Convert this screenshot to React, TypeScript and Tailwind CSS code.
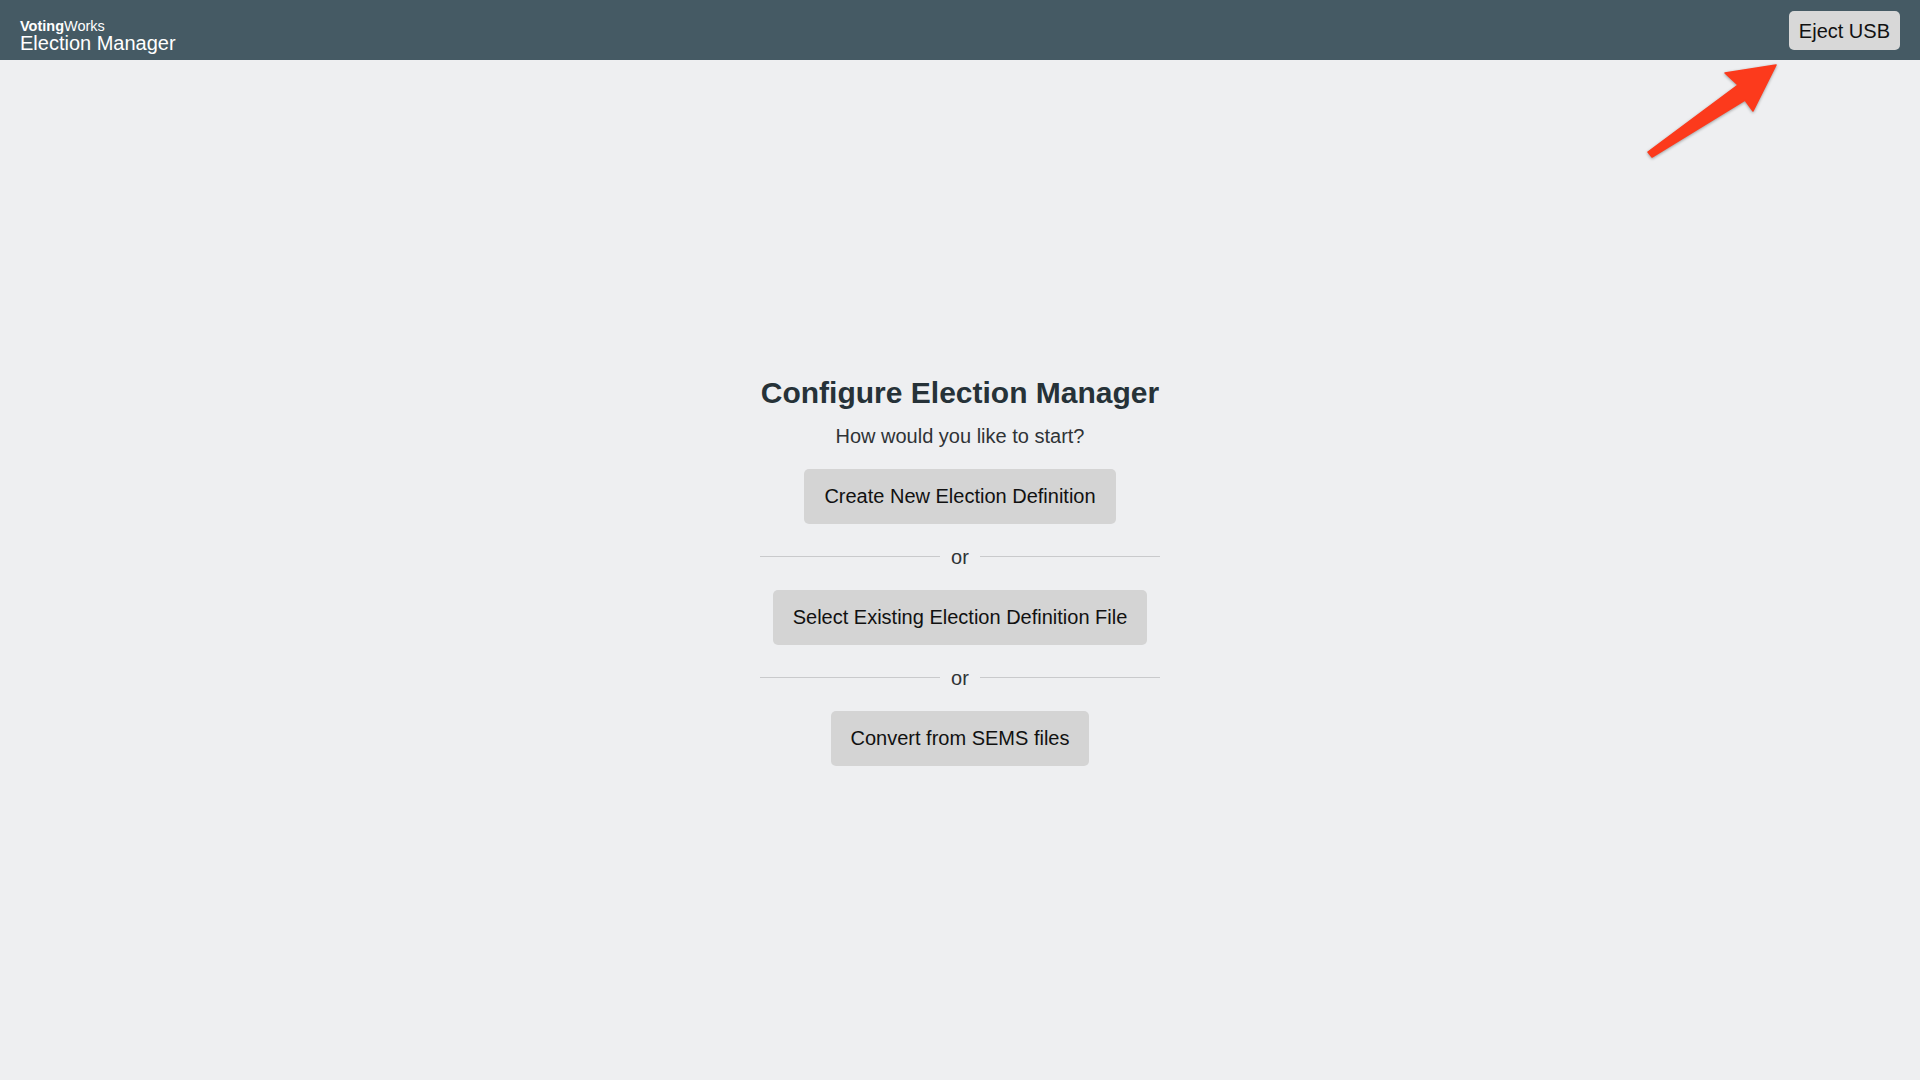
import React from "react";

const OrDivider = () => (
  <div className="mt-[21px] flex w-full items-center gap-[11px]">
    <div className="h-px flex-1 bg-[#c9cacc]" />
    <span className="text-[20px] leading-6 text-[#2f3336]">or</span>
    <div className="h-px flex-1 bg-[#c9cacc]" />
  </div>
);

const ActionButton = ({ label }: { label: string }) => (
  <button
    type="button"
    className="mt-[21px] rounded-[5px] bg-[#d4d4d4] px-5 py-[15.5px] text-[20px] leading-6 text-[#111]"
  >
    {label}
  </button>
);

const App = () => {
  return (
    <div className="relative flex min-h-screen flex-col bg-[#eeeff1] font-['Liberation_Sans',Arial,sans-serif]">
      {/* Header */}
      <header className="flex h-[60px] items-start justify-between bg-[#455a64] px-5">
        <div className="pt-[18.5px] text-white">
          <div className="text-[14.5px] leading-[14px]">
            <span className="font-bold">Voting</span>Works
          </div>
          <div className="text-[20px] leading-[20px]">Election Manager</div>
        </div>
        <button
          type="button"
          className="mt-[11px] rounded-[5px] bg-[#d8d8d8] px-[10px] py-[7.5px] text-[20px] leading-6 text-[#111]"
        >
          Eject USB
        </button>
      </header>

      {/* Main */}
      <main className="flex flex-1 items-center justify-center">
        <div className="flex w-[400px] flex-col items-center">
          <h1 className="whitespace-nowrap text-[30px] font-bold leading-9 text-[#263238]">
            Configure Election Manager
          </h1>
          <p className="mt-[13px] text-[20px] leading-6 text-[#2f3336]">
            How would you like to start?
          </p>
          <ActionButton label="Create New Election Definition" />
          <OrDivider />
          <ActionButton label="Select Existing Election Definition File" />
          <OrDivider />
          <ActionButton label="Convert from SEMS files" />
        </div>
      </main>

      {/* Annotation arrow */}
      <svg
        className="pointer-events-none absolute left-[1640px] top-[55px]"
        width="150"
        height="110"
        viewBox="0 0 150 110"
        style={{ filter: "drop-shadow(0 1px 1.5px rgba(0,0,0,0.35))" }}
      >
        <polygon
          points="136,10 85,18 98,30 8,97 12,102 105,45 113,56"
          fill="#fc3a1c"
          strokeLinejoin="round"
          stroke="#fc3a1c"
          strokeWidth="1.5"
        />
      </svg>
    </div>
  );
};

export default App;
